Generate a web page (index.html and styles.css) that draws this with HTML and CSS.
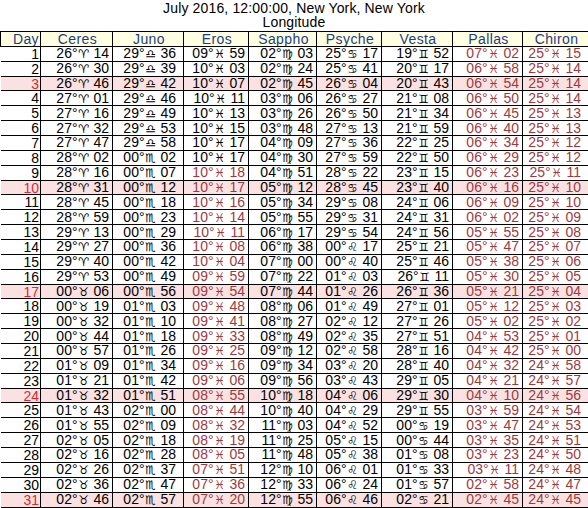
FILE: index.html
```html
<!DOCTYPE html>
<html>
<head>
<meta charset="utf-8">
<link rel="stylesheet" href="styles.css">
</head>
<body>
<div class="title">July 2016, 12:00:00, New York, New York</div>
<div class="title">Longitude</div>
<table class="eph">
<colgroup><col class="c-day"><col class="c-ceres"><col class="c-juno"><col class="c-eros"><col class="c-sappho"><col class="c-psyche"><col class="c-vesta"><col class="c-pallas"><col class="c-chiron"></colgroup>
<thead>
<tr><th class="h-day">Day</th><th>Ceres</th><th>Juno</th><th>Eros</th><th>Sappho</th><th>Psyche</th><th>Vesta</th><th>Pallas</th><th>Chiron</th></tr>
</thead>
<tbody>
<tr><td>1</td><td>26°<span class="z">♈&#xFE0E;</span> 14</td><td>29°<span class="z">♎&#xFE0E;</span> 36</td><td>09°<span class="z">♓&#xFE0E;</span> 59</td><td>02°<span class="z">♍&#xFE0E;</span> 03</td><td>25°<span class="z">♋&#xFE0E;</span> 17</td><td>19°<span class="z">♊&#xFE0E;</span> 52</td><td class="r">07°<span class="z">♓&#xFE0E;</span> 02</td><td class="r">25°<span class="z">♓&#xFE0E;</span> 15</td></tr>
<tr><td>2</td><td>26°<span class="z">♈&#xFE0E;</span> 30</td><td>29°<span class="z">♎&#xFE0E;</span> 39</td><td>10°<span class="z">♓&#xFE0E;</span> 03</td><td>02°<span class="z">♍&#xFE0E;</span> 24</td><td>25°<span class="z">♋&#xFE0E;</span> 41</td><td>20°<span class="z">♊&#xFE0E;</span> 17</td><td class="r">06°<span class="z">♓&#xFE0E;</span> 58</td><td class="r">25°<span class="z">♓&#xFE0E;</span> 14</td></tr>
<tr class="hl"><td>3</td><td>26°<span class="z">♈&#xFE0E;</span> 46</td><td>29°<span class="z">♎&#xFE0E;</span> 42</td><td>10°<span class="z">♓&#xFE0E;</span> 07</td><td>02°<span class="z">♍&#xFE0E;</span> 45</td><td>26°<span class="z">♋&#xFE0E;</span> 04</td><td>20°<span class="z">♊&#xFE0E;</span> 43</td><td class="r">06°<span class="z">♓&#xFE0E;</span> 54</td><td class="r">25°<span class="z">♓&#xFE0E;</span> 14</td></tr>
<tr><td>4</td><td>27°<span class="z">♈&#xFE0E;</span> 01</td><td>29°<span class="z">♎&#xFE0E;</span> 46</td><td>10°<span class="z">♓&#xFE0E;</span> 11</td><td>03°<span class="z">♍&#xFE0E;</span> 06</td><td>26°<span class="z">♋&#xFE0E;</span> 27</td><td>21°<span class="z">♊&#xFE0E;</span> 08</td><td class="r">06°<span class="z">♓&#xFE0E;</span> 50</td><td class="r">25°<span class="z">♓&#xFE0E;</span> 14</td></tr>
<tr><td>5</td><td>27°<span class="z">♈&#xFE0E;</span> 16</td><td>29°<span class="z">♎&#xFE0E;</span> 49</td><td>10°<span class="z">♓&#xFE0E;</span> 13</td><td>03°<span class="z">♍&#xFE0E;</span> 26</td><td>26°<span class="z">♋&#xFE0E;</span> 50</td><td>21°<span class="z">♊&#xFE0E;</span> 34</td><td class="r">06°<span class="z">♓&#xFE0E;</span> 45</td><td class="r">25°<span class="z">♓&#xFE0E;</span> 13</td></tr>
<tr><td>6</td><td>27°<span class="z">♈&#xFE0E;</span> 32</td><td>29°<span class="z">♎&#xFE0E;</span> 53</td><td>10°<span class="z">♓&#xFE0E;</span> 15</td><td>03°<span class="z">♍&#xFE0E;</span> 48</td><td>27°<span class="z">♋&#xFE0E;</span> 13</td><td>21°<span class="z">♊&#xFE0E;</span> 59</td><td class="r">06°<span class="z">♓&#xFE0E;</span> 40</td><td class="r">25°<span class="z">♓&#xFE0E;</span> 13</td></tr>
<tr><td>7</td><td>27°<span class="z">♈&#xFE0E;</span> 47</td><td>29°<span class="z">♎&#xFE0E;</span> 58</td><td>10°<span class="z">♓&#xFE0E;</span> 17</td><td>04°<span class="z">♍&#xFE0E;</span> 09</td><td>27°<span class="z">♋&#xFE0E;</span> 36</td><td>22°<span class="z">♊&#xFE0E;</span> 25</td><td class="r">06°<span class="z">♓&#xFE0E;</span> 34</td><td class="r">25°<span class="z">♓&#xFE0E;</span> 12</td></tr>
<tr><td>8</td><td>28°<span class="z">♈&#xFE0E;</span> 02</td><td>00°<span class="z">♏&#xFE0E;</span> 02</td><td>10°<span class="z">♓&#xFE0E;</span> 17</td><td>04°<span class="z">♍&#xFE0E;</span> 30</td><td>27°<span class="z">♋&#xFE0E;</span> 59</td><td>22°<span class="z">♊&#xFE0E;</span> 50</td><td class="r">06°<span class="z">♓&#xFE0E;</span> 29</td><td class="r">25°<span class="z">♓&#xFE0E;</span> 12</td></tr>
<tr><td>9</td><td>28°<span class="z">♈&#xFE0E;</span> 16</td><td>00°<span class="z">♏&#xFE0E;</span> 07</td><td class="r">10°<span class="z">♓&#xFE0E;</span> 18</td><td>04°<span class="z">♍&#xFE0E;</span> 51</td><td>28°<span class="z">♋&#xFE0E;</span> 22</td><td>23°<span class="z">♊&#xFE0E;</span> 15</td><td class="r">06°<span class="z">♓&#xFE0E;</span> 23</td><td class="r">25°<span class="z">♓&#xFE0E;</span> 11</td></tr>
<tr class="hl"><td>10</td><td>28°<span class="z">♈&#xFE0E;</span> 31</td><td>00°<span class="z">♏&#xFE0E;</span> 12</td><td class="r">10°<span class="z">♓&#xFE0E;</span> 17</td><td>05°<span class="z">♍&#xFE0E;</span> 12</td><td>28°<span class="z">♋&#xFE0E;</span> 45</td><td>23°<span class="z">♊&#xFE0E;</span> 40</td><td class="r">06°<span class="z">♓&#xFE0E;</span> 16</td><td class="r">25°<span class="z">♓&#xFE0E;</span> 10</td></tr>
<tr><td>11</td><td>28°<span class="z">♈&#xFE0E;</span> 45</td><td>00°<span class="z">♏&#xFE0E;</span> 18</td><td class="r">10°<span class="z">♓&#xFE0E;</span> 16</td><td>05°<span class="z">♍&#xFE0E;</span> 34</td><td>29°<span class="z">♋&#xFE0E;</span> 08</td><td>24°<span class="z">♊&#xFE0E;</span> 06</td><td class="r">06°<span class="z">♓&#xFE0E;</span> 09</td><td class="r">25°<span class="z">♓&#xFE0E;</span> 10</td></tr>
<tr><td>12</td><td>28°<span class="z">♈&#xFE0E;</span> 59</td><td>00°<span class="z">♏&#xFE0E;</span> 23</td><td class="r">10°<span class="z">♓&#xFE0E;</span> 14</td><td>05°<span class="z">♍&#xFE0E;</span> 55</td><td>29°<span class="z">♋&#xFE0E;</span> 31</td><td>24°<span class="z">♊&#xFE0E;</span> 31</td><td class="r">06°<span class="z">♓&#xFE0E;</span> 02</td><td class="r">25°<span class="z">♓&#xFE0E;</span> 09</td></tr>
<tr><td>13</td><td>29°<span class="z">♈&#xFE0E;</span> 13</td><td>00°<span class="z">♏&#xFE0E;</span> 29</td><td class="r">10°<span class="z">♓&#xFE0E;</span> 11</td><td>06°<span class="z">♍&#xFE0E;</span> 17</td><td>29°<span class="z">♋&#xFE0E;</span> 54</td><td>24°<span class="z">♊&#xFE0E;</span> 56</td><td class="r">05°<span class="z">♓&#xFE0E;</span> 55</td><td class="r">25°<span class="z">♓&#xFE0E;</span> 08</td></tr>
<tr><td>14</td><td>29°<span class="z">♈&#xFE0E;</span> 27</td><td>00°<span class="z">♏&#xFE0E;</span> 36</td><td class="r">10°<span class="z">♓&#xFE0E;</span> 08</td><td>06°<span class="z">♍&#xFE0E;</span> 38</td><td>00°<span class="z">♌&#xFE0E;</span> 17</td><td>25°<span class="z">♊&#xFE0E;</span> 21</td><td class="r">05°<span class="z">♓&#xFE0E;</span> 47</td><td class="r">25°<span class="z">♓&#xFE0E;</span> 07</td></tr>
<tr><td>15</td><td>29°<span class="z">♈&#xFE0E;</span> 40</td><td>00°<span class="z">♏&#xFE0E;</span> 42</td><td class="r">10°<span class="z">♓&#xFE0E;</span> 04</td><td>07°<span class="z">♍&#xFE0E;</span> 00</td><td>00°<span class="z">♌&#xFE0E;</span> 40</td><td>25°<span class="z">♊&#xFE0E;</span> 46</td><td class="r">05°<span class="z">♓&#xFE0E;</span> 38</td><td class="r">25°<span class="z">♓&#xFE0E;</span> 06</td></tr>
<tr><td>16</td><td>29°<span class="z">♈&#xFE0E;</span> 53</td><td>00°<span class="z">♏&#xFE0E;</span> 49</td><td class="r">09°<span class="z">♓&#xFE0E;</span> 59</td><td>07°<span class="z">♍&#xFE0E;</span> 22</td><td>01°<span class="z">♌&#xFE0E;</span> 03</td><td>26°<span class="z">♊&#xFE0E;</span> 11</td><td class="r">05°<span class="z">♓&#xFE0E;</span> 30</td><td class="r">25°<span class="z">♓&#xFE0E;</span> 05</td></tr>
<tr class="hl"><td>17</td><td>00°<span class="z">♉&#xFE0E;</span> 06</td><td>00°<span class="z">♏&#xFE0E;</span> 56</td><td class="r">09°<span class="z">♓&#xFE0E;</span> 54</td><td>07°<span class="z">♍&#xFE0E;</span> 44</td><td>01°<span class="z">♌&#xFE0E;</span> 26</td><td>26°<span class="z">♊&#xFE0E;</span> 36</td><td class="r">05°<span class="z">♓&#xFE0E;</span> 21</td><td class="r">25°<span class="z">♓&#xFE0E;</span> 04</td></tr>
<tr><td>18</td><td>00°<span class="z">♉&#xFE0E;</span> 19</td><td>01°<span class="z">♏&#xFE0E;</span> 03</td><td class="r">09°<span class="z">♓&#xFE0E;</span> 48</td><td>08°<span class="z">♍&#xFE0E;</span> 06</td><td>01°<span class="z">♌&#xFE0E;</span> 49</td><td>27°<span class="z">♊&#xFE0E;</span> 01</td><td class="r">05°<span class="z">♓&#xFE0E;</span> 12</td><td class="r">25°<span class="z">♓&#xFE0E;</span> 03</td></tr>
<tr><td>19</td><td>00°<span class="z">♉&#xFE0E;</span> 32</td><td>01°<span class="z">♏&#xFE0E;</span> 10</td><td class="r">09°<span class="z">♓&#xFE0E;</span> 41</td><td>08°<span class="z">♍&#xFE0E;</span> 27</td><td>02°<span class="z">♌&#xFE0E;</span> 12</td><td>27°<span class="z">♊&#xFE0E;</span> 26</td><td class="r">05°<span class="z">♓&#xFE0E;</span> 02</td><td class="r">25°<span class="z">♓&#xFE0E;</span> 02</td></tr>
<tr><td>20</td><td>00°<span class="z">♉&#xFE0E;</span> 44</td><td>01°<span class="z">♏&#xFE0E;</span> 18</td><td class="r">09°<span class="z">♓&#xFE0E;</span> 33</td><td>08°<span class="z">♍&#xFE0E;</span> 49</td><td>02°<span class="z">♌&#xFE0E;</span> 35</td><td>27°<span class="z">♊&#xFE0E;</span> 51</td><td class="r">04°<span class="z">♓&#xFE0E;</span> 53</td><td class="r">25°<span class="z">♓&#xFE0E;</span> 01</td></tr>
<tr><td>21</td><td>00°<span class="z">♉&#xFE0E;</span> 57</td><td>01°<span class="z">♏&#xFE0E;</span> 26</td><td class="r">09°<span class="z">♓&#xFE0E;</span> 25</td><td>09°<span class="z">♍&#xFE0E;</span> 12</td><td>02°<span class="z">♌&#xFE0E;</span> 58</td><td>28°<span class="z">♊&#xFE0E;</span> 16</td><td class="r">04°<span class="z">♓&#xFE0E;</span> 42</td><td class="r">25°<span class="z">♓&#xFE0E;</span> 00</td></tr>
<tr><td>22</td><td>01°<span class="z">♉&#xFE0E;</span> 09</td><td>01°<span class="z">♏&#xFE0E;</span> 34</td><td class="r">09°<span class="z">♓&#xFE0E;</span> 16</td><td>09°<span class="z">♍&#xFE0E;</span> 34</td><td>03°<span class="z">♌&#xFE0E;</span> 20</td><td>28°<span class="z">♊&#xFE0E;</span> 40</td><td class="r">04°<span class="z">♓&#xFE0E;</span> 32</td><td class="r">24°<span class="z">♓&#xFE0E;</span> 58</td></tr>
<tr><td>23</td><td>01°<span class="z">♉&#xFE0E;</span> 21</td><td>01°<span class="z">♏&#xFE0E;</span> 42</td><td class="r">09°<span class="z">♓&#xFE0E;</span> 06</td><td>09°<span class="z">♍&#xFE0E;</span> 56</td><td>03°<span class="z">♌&#xFE0E;</span> 43</td><td>29°<span class="z">♊&#xFE0E;</span> 05</td><td class="r">04°<span class="z">♓&#xFE0E;</span> 21</td><td class="r">24°<span class="z">♓&#xFE0E;</span> 57</td></tr>
<tr class="hl"><td>24</td><td>01°<span class="z">♉&#xFE0E;</span> 32</td><td>01°<span class="z">♏&#xFE0E;</span> 51</td><td class="r">08°<span class="z">♓&#xFE0E;</span> 55</td><td>10°<span class="z">♍&#xFE0E;</span> 18</td><td>04°<span class="z">♌&#xFE0E;</span> 06</td><td>29°<span class="z">♊&#xFE0E;</span> 30</td><td class="r">04°<span class="z">♓&#xFE0E;</span> 10</td><td class="r">24°<span class="z">♓&#xFE0E;</span> 56</td></tr>
<tr><td>25</td><td>01°<span class="z">♉&#xFE0E;</span> 43</td><td>02°<span class="z">♏&#xFE0E;</span> 00</td><td class="r">08°<span class="z">♓&#xFE0E;</span> 44</td><td>10°<span class="z">♍&#xFE0E;</span> 40</td><td>04°<span class="z">♌&#xFE0E;</span> 29</td><td>29°<span class="z">♊&#xFE0E;</span> 55</td><td class="r">03°<span class="z">♓&#xFE0E;</span> 59</td><td class="r">24°<span class="z">♓&#xFE0E;</span> 54</td></tr>
<tr><td>26</td><td>01°<span class="z">♉&#xFE0E;</span> 55</td><td>02°<span class="z">♏&#xFE0E;</span> 09</td><td class="r">08°<span class="z">♓&#xFE0E;</span> 32</td><td>11°<span class="z">♍&#xFE0E;</span> 03</td><td>04°<span class="z">♌&#xFE0E;</span> 52</td><td>00°<span class="z">♋&#xFE0E;</span> 19</td><td class="r">03°<span class="z">♓&#xFE0E;</span> 47</td><td class="r">24°<span class="z">♓&#xFE0E;</span> 53</td></tr>
<tr><td>27</td><td>02°<span class="z">♉&#xFE0E;</span> 05</td><td>02°<span class="z">♏&#xFE0E;</span> 18</td><td class="r">08°<span class="z">♓&#xFE0E;</span> 19</td><td>11°<span class="z">♍&#xFE0E;</span> 25</td><td>05°<span class="z">♌&#xFE0E;</span> 15</td><td>00°<span class="z">♋&#xFE0E;</span> 44</td><td class="r">03°<span class="z">♓&#xFE0E;</span> 35</td><td class="r">24°<span class="z">♓&#xFE0E;</span> 51</td></tr>
<tr><td>28</td><td>02°<span class="z">♉&#xFE0E;</span> 16</td><td>02°<span class="z">♏&#xFE0E;</span> 28</td><td class="r">08°<span class="z">♓&#xFE0E;</span> 05</td><td>11°<span class="z">♍&#xFE0E;</span> 48</td><td>05°<span class="z">♌&#xFE0E;</span> 38</td><td>01°<span class="z">♋&#xFE0E;</span> 08</td><td class="r">03°<span class="z">♓&#xFE0E;</span> 23</td><td class="r">24°<span class="z">♓&#xFE0E;</span> 50</td></tr>
<tr><td>29</td><td>02°<span class="z">♉&#xFE0E;</span> 26</td><td>02°<span class="z">♏&#xFE0E;</span> 37</td><td class="r">07°<span class="z">♓&#xFE0E;</span> 51</td><td>12°<span class="z">♍&#xFE0E;</span> 10</td><td>06°<span class="z">♌&#xFE0E;</span> 01</td><td>01°<span class="z">♋&#xFE0E;</span> 33</td><td class="r">03°<span class="z">♓&#xFE0E;</span> 11</td><td class="r">24°<span class="z">♓&#xFE0E;</span> 48</td></tr>
<tr><td>30</td><td>02°<span class="z">♉&#xFE0E;</span> 36</td><td>02°<span class="z">♏&#xFE0E;</span> 47</td><td class="r">07°<span class="z">♓&#xFE0E;</span> 36</td><td>12°<span class="z">♍&#xFE0E;</span> 33</td><td>06°<span class="z">♌&#xFE0E;</span> 24</td><td>01°<span class="z">♋&#xFE0E;</span> 57</td><td class="r">02°<span class="z">♓&#xFE0E;</span> 58</td><td class="r">24°<span class="z">♓&#xFE0E;</span> 47</td></tr>
<tr class="hl"><td>31</td><td>02°<span class="z">♉&#xFE0E;</span> 46</td><td>02°<span class="z">♏&#xFE0E;</span> 57</td><td class="r">07°<span class="z">♓&#xFE0E;</span> 20</td><td>12°<span class="z">♍&#xFE0E;</span> 55</td><td>06°<span class="z">♌&#xFE0E;</span> 46</td><td>02°<span class="z">♋&#xFE0E;</span> 21</td><td class="r">02°<span class="z">♓&#xFE0E;</span> 45</td><td class="r">24°<span class="z">♓&#xFE0E;</span> 45</td></tr>
</tbody>
</table>
</body>
</html>
```
FILE: styles.css
```css
html, body {
  margin: 0;
  padding: 0;
  background: #ffffff;
}
body {
  font-family: "Liberation Sans", Arial, sans-serif;
  color: #000000;
  width: 588px;
  padding-top: 1px;
}
.title {
  text-align: center;
  font-size: 14px;
  line-height: 14px;
  height: 14px;
  letter-spacing: 0.15px;
}
.eph {
  border-collapse: collapse;
  table-layout: fixed;
  width: 588px;
  margin-top: 2px;
  font-size: 14px;
}
.c-day { width: 40px; }
.c-ceres { width: 72px; }
.c-juno { width: 71px; }
.c-eros { width: 65px; }
.c-sappho { width: 68px; }
.c-psyche { width: 65px; }
.c-vesta { width: 71px; }
.c-pallas { width: 70px; }
.c-chiron { width: 66px; }
.eph tr {
  height: 14.87px;
}
.eph th,
.eph td {
  border: 1px solid #000000;
  padding: 0 3px 0 0;
  line-height: 12px;
  white-space: nowrap;
  overflow: hidden;
  font-weight: normal;
}
.eph th {
  background: #ffffe1;
  color: #1d3b8c;
  text-align: center;
  padding: 0 0 0 2px;
  letter-spacing: 0.4px;
}
.eph th.h-day {
  text-align: right;
  padding: 0 1px 0 0;
}
.eph td {
  text-align: right;
}
.eph td:first-child {
  padding-right: 1px;
  border-left: none;
}
.eph td:nth-child(3) {
  padding-right: 7px;
}
.eph td:last-child {
  padding-right: 7px;
}
.eph .z {
  display: inline-block;
  width: 12px;
  text-align: center;
  font-family: "DejaVu Sans", sans-serif;
  font-size: 12px;
  line-height: 12px;
  vertical-align: baseline;
}
.eph td.r {
  color: #9e3a3e;
}
.eph tr.hl td {
  background: #fbe1e1;
}
.eph tr.hl td:first-child {
  color: #e3262b;
}
```
